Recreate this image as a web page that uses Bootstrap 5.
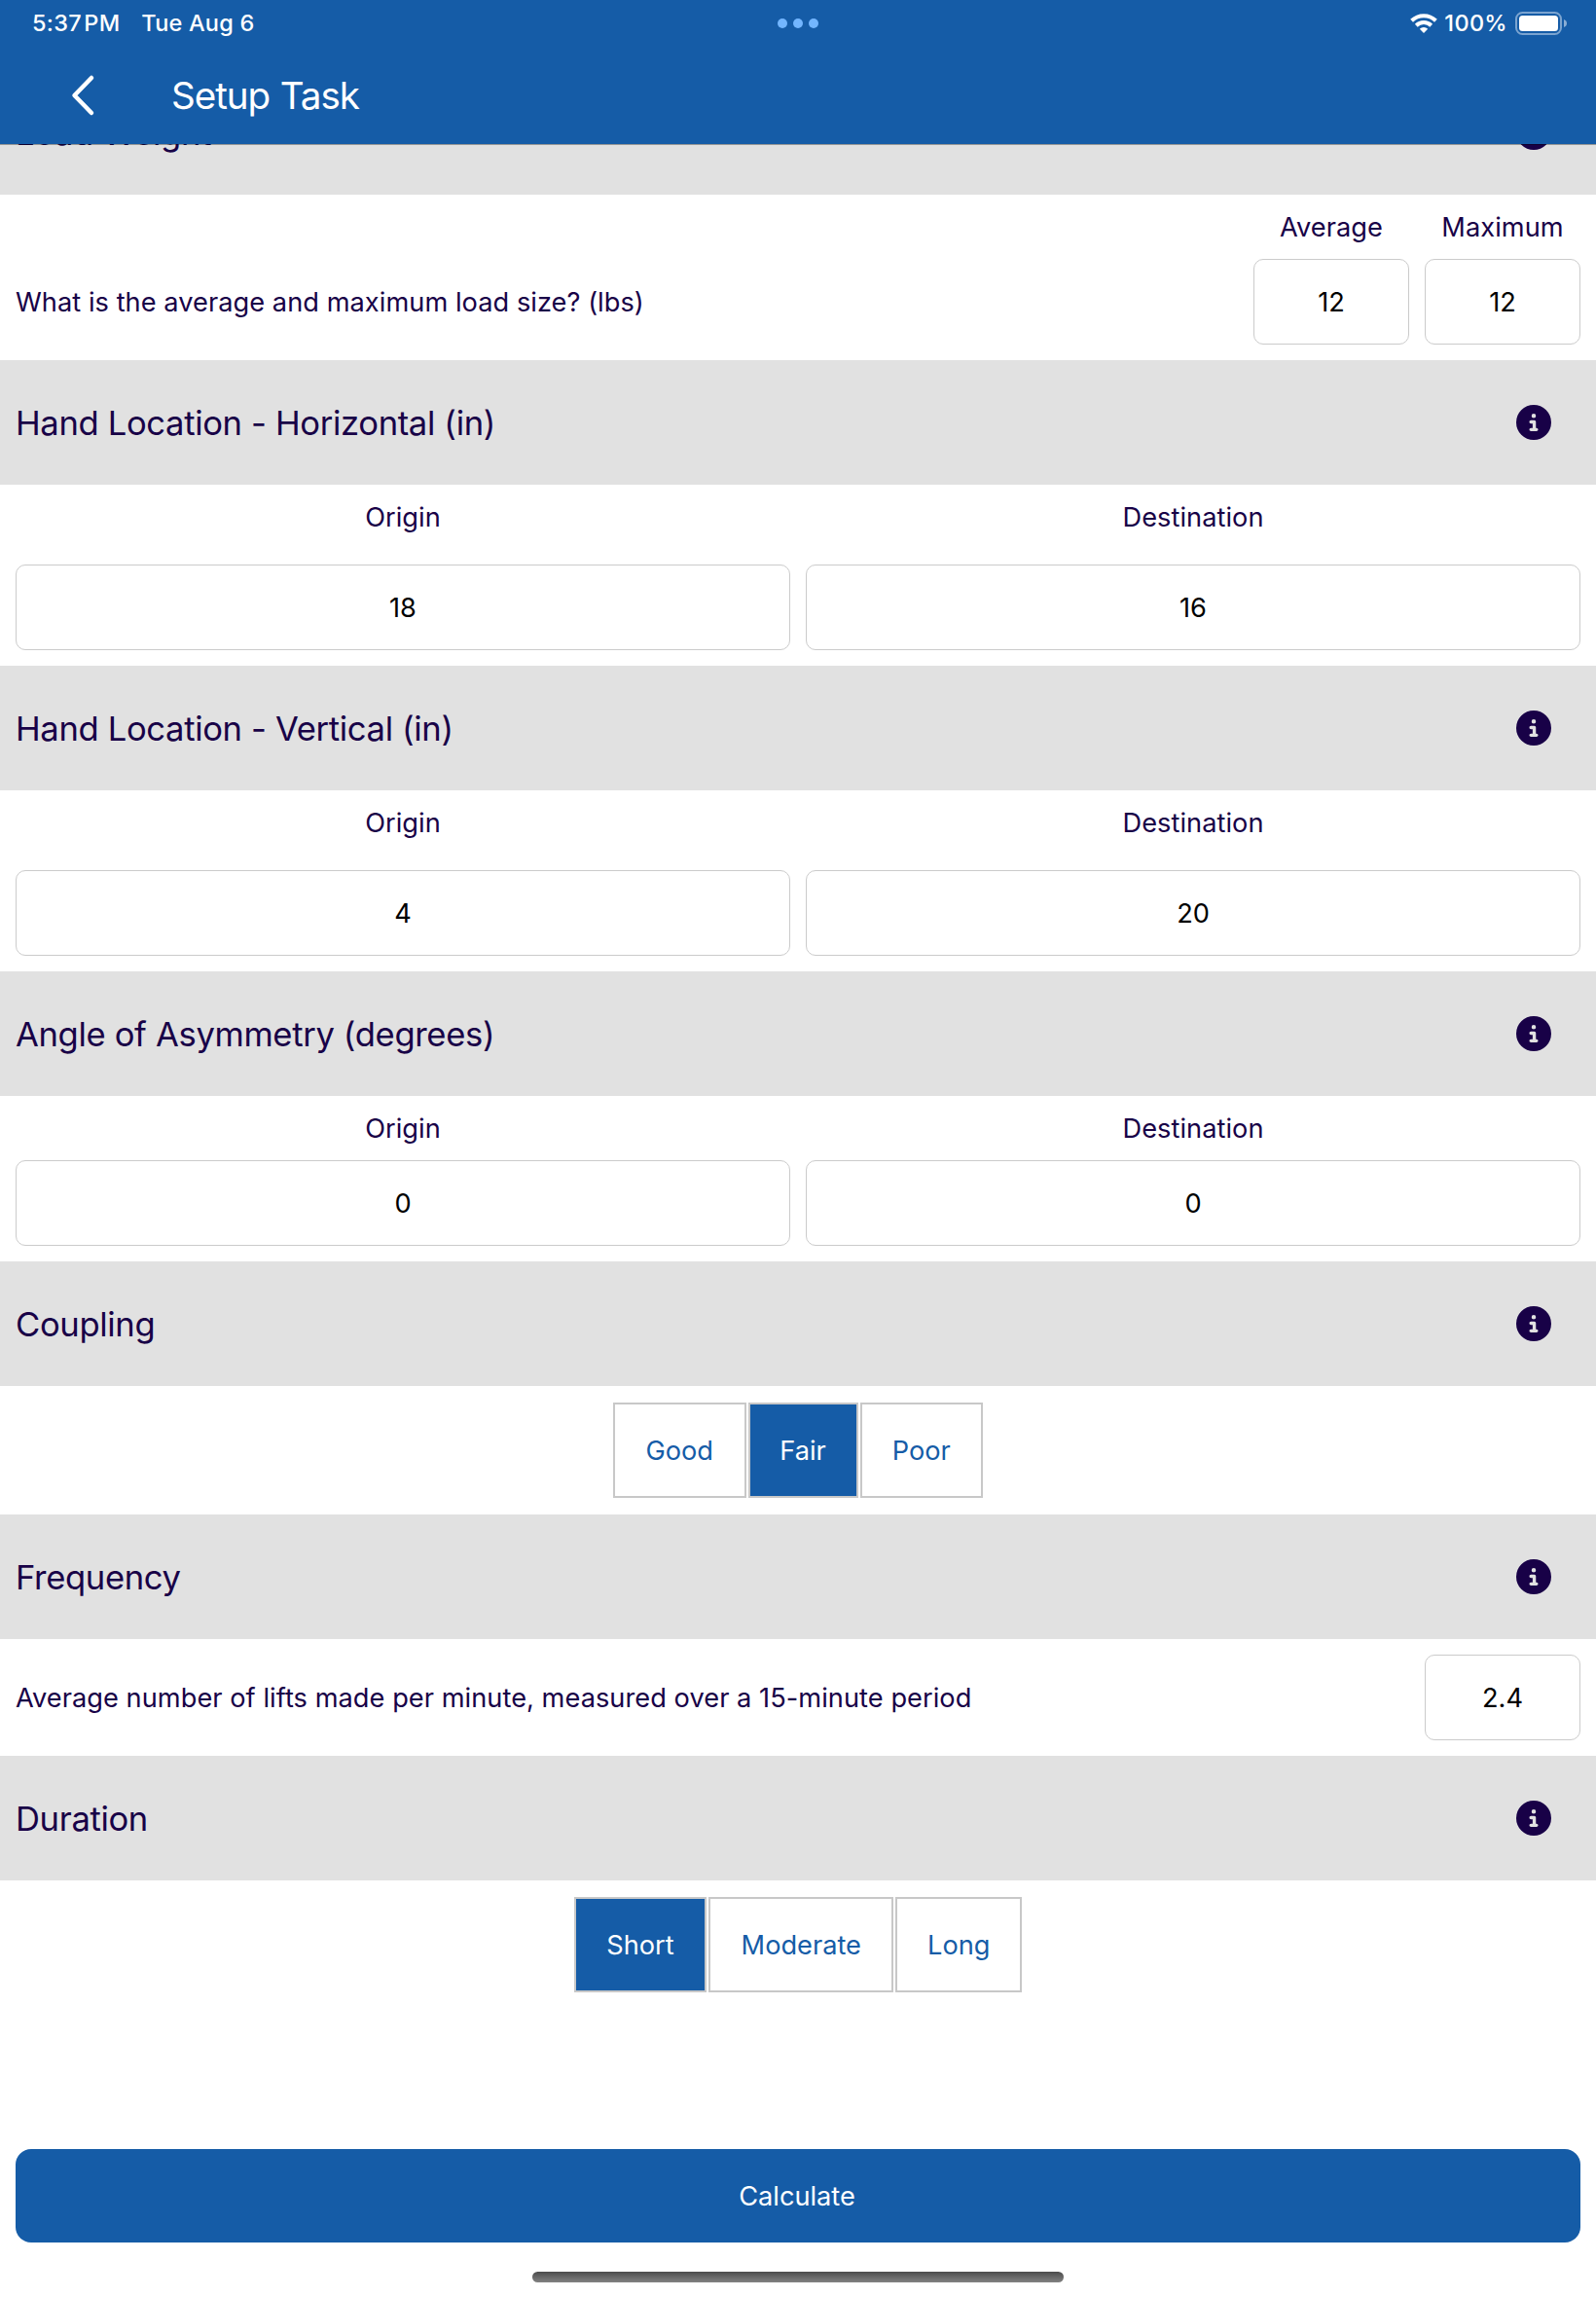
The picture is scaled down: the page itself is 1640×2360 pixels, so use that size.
<!DOCTYPE html>
<html lang="en">
<head>
<meta charset="utf-8">
<meta name="viewport" content="width=device-width, initial-scale=1">
<title>Setup Task</title>
<link href="https://cdn.jsdelivr.net/npm/bootstrap@5.3.0/dist/css/bootstrap.min.css" rel="stylesheet">
<style>
  :root { --brand: #155ca7; --ink: #180147; --band: #e1e1e1; }
  body { font-family: Inter, "Liberation Sans", sans-serif; font-size: 27.2px; line-height: 34px; letter-spacing: .05px; color: var(--ink); background: #fff; height: 2360px; overflow: hidden; }
  .app-top { height: 149px; background: var(--brand); background-clip: padding-box; border-bottom: 1px solid rgba(0,0,0,.33); }
  .status { height: 48px; font-size: 23.5px; line-height: 48px; padding: 0 30px; font-weight: 450; }
  .status-time { letter-spacing: .25px; margin-left: 3px; margin-right: 22px; word-spacing: -4px; }
  .status-date { letter-spacing: .2px; }
  .status-pct { letter-spacing: .3px; margin-left: 7px; margin-right: 8px; }
  .status-side { flex: 1 1 0; }
  .status-dots { gap: 6px; }
  .status-dot { width: 10px; height: 10px; background: #73b6ff; }
  .title-bar { height: 100px; padding-left: 72px; }
  .title-bar h1 { font-size: 38.6px; line-height: 48px; margin-left: 76px; letter-spacing: -1.05px; word-spacing: 1px; }
  .page-body { padding-top: 72px; height: 2360px; }
  .band { height: 128px; background: var(--band); padding: 0 46px 0 16px; }
  .band h2 { font-size: 34.6px; line-height: 44px; letter-spacing: -.34px; padding-bottom: 1px; }
  .field-label { padding-top: 1px; margin-bottom: 15px; }
  .field-label.roomy { margin-bottom: 31px; }
  .question { padding-top: 1px; }
  .q-load { padding-bottom: 26px; }
  .field-box { height: 88px; border: 1px solid #cbcbcb; border-radius: 10px; padding: 0; font-size: 27.2px; line-height: 34px; color: #000; }
  .field-box:focus { box-shadow: none; }
  .field-sm { width: 160px; }
  .choice { height: 98px; border: 2px solid #c8c8c8; border-radius: 0; padding: 2px 0 0; font-size: 27.2px; color: var(--brand); background: #fff; }
  .choice.active { background: var(--brand); color: #fff; border-color: #c8c8c8; }
  .choices { padding: 17px 0; gap: 2px; }
  .w-good { width: 136.5px; } .w-fair { width: 113px; } .w-poor { width: 126.5px; }
  .w-moderate { width: 190px; } .w-long { width: 130px; }
  .calc { height: 96px; border-radius: 16px; background: var(--brand); color: #fff; font-size: 27.2px; margin: 0 16px; padding: 2px 2px 0 0; }
  .home-bar { width: 546px; height: 11px; margin: 30px auto 15px; background: linear-gradient(#4b4b4b, #828282); }
</style>
</head>
<body>
<svg class="d-none">
  <symbol id="info" viewBox="0 0 512 512"><path fill="currentColor" d="M256 512A256 256 0 1 0 256 0a256 256 0 1 0 0 512zM216 336h24V272H216c-13.3 0-24-10.700-24-24s10.700-24 24-24h48c13.300 0 24 10.700 24 24v88h8c13.300 0 24 10.700 24 24s-10.700 24-24 24H216c-13.300 0-24-10.700-24-24s10.700-24 24-24zm40-208a32 32 0 1 1 0 64 32 32 0 1 1 0-64z"/></symbol>
</svg>

<header class="app-top fixed-top text-white">
  <div class="status d-flex align-items-center">
    <div class="status-side d-flex">
      <span class="status-time">5:37 PM</span><span class="status-date">Tue Aug 6</span>
    </div>
    <div class="status-dots d-flex">
      <span class="status-dot rounded-circle"></span><span class="status-dot rounded-circle"></span><span class="status-dot rounded-circle"></span>
    </div>
    <div class="status-side d-flex justify-content-end align-items-center">
      <svg width="28" height="20" viewBox="0 0 28 20" fill="none" stroke="#fff" stroke-width="4">
        <path d="M1.600 7.300a17.800 17.800 0 0 1 24.800 0"/>
        <path d="M6.300 12.200a11.100 11.100 0 0 1 15.400 0"/>
        <path d="M14 20l-4.200-4.300a6 6 0 0 1 8.400 0z" fill="#fff" stroke="none"/>
      </svg>
      <span class="status-pct">100%</span>
      <svg width="53" height="24" viewBox="0 0 53 24">
        <rect x="1" y="1" width="46" height="22" rx="6.500" fill="none" stroke="#7ba4d0" stroke-width="2"/>
        <rect x="4" y="4" width="40" height="16" rx="3.500" fill="#fff"/>
        <path d="M50 8c4 1.200 4 6.800 0 8z" fill="#8aaed5"/>
      </svg>
    </div>
  </div>
  <div class="title-bar d-flex align-items-center">
    <svg width="28" height="44" viewBox="0 0 28 44" fill="none" stroke="#fff" stroke-width="4.500" stroke-linecap="round" stroke-linejoin="round"><path d="M22 4L4.500 22 22 40"/></svg>
    <h1 class="fw-normal mb-0">Setup Task</h1>
  </div>
</header>

<main class="page-body d-flex flex-column">
  <div class="band d-flex align-items-center justify-content-between"><h2 class="fw-normal mb-0">Load Weight</h2><svg width="36" height="36"><use href="#info"/></svg></div>
  <section class="d-flex justify-content-between align-items-end p-3">
    <label class="question q-load">What is the average and maximum load size? (lbs)</label>
    <div class="d-flex gap-3 text-center">
      <div class="field-sm"><div class="field-label">Average</div><input class="form-control field-box text-center" value="12"></div>
      <div class="field-sm"><div class="field-label">Maximum</div><input class="form-control field-box text-center" value="12"></div>
    </div>
  </section>

  <div class="band d-flex align-items-center justify-content-between"><h2 class="fw-normal mb-0">Hand Location - Horizontal (in)</h2><svg width="36" height="36"><use href="#info"/></svg></div>
  <section class="d-flex gap-3 p-3 text-center">
    <div class="flex-fill"><div class="field-label roomy">Origin</div><input class="form-control field-box text-center" value="18"></div>
    <div class="flex-fill"><div class="field-label roomy">Destination</div><input class="form-control field-box text-center" value="16"></div>
  </section>

  <div class="band d-flex align-items-center justify-content-between"><h2 class="fw-normal mb-0">Hand Location - Vertical (in)</h2><svg width="36" height="36"><use href="#info"/></svg></div>
  <section class="d-flex gap-3 p-3 text-center">
    <div class="flex-fill"><div class="field-label roomy">Origin</div><input class="form-control field-box text-center" value="4"></div>
    <div class="flex-fill"><div class="field-label roomy">Destination</div><input class="form-control field-box text-center" value="20"></div>
  </section>

  <div class="band d-flex align-items-center justify-content-between"><h2 class="fw-normal mb-0">Angle of Asymmetry (degrees)</h2><svg width="36" height="36"><use href="#info"/></svg></div>
  <section class="d-flex gap-3 p-3 text-center">
    <div class="flex-fill"><div class="field-label">Origin</div><input class="form-control field-box text-center" value="0"></div>
    <div class="flex-fill"><div class="field-label">Destination</div><input class="form-control field-box text-center" value="0"></div>
  </section>

  <div class="band d-flex align-items-center justify-content-between"><h2 class="fw-normal mb-0">Coupling</h2><svg width="36" height="36"><use href="#info"/></svg></div>
  <section class="choices d-flex justify-content-center">
    <button class="btn choice w-good">Good</button><button class="btn choice active w-fair">Fair</button><button class="btn choice w-poor">Poor</button>
  </section>

  <div class="band d-flex align-items-center justify-content-between"><h2 class="fw-normal mb-0">Frequency</h2><svg width="36" height="36"><use href="#info"/></svg></div>
  <section class="d-flex justify-content-between align-items-center p-3">
    <label class="question">Average number of lifts made per minute, measured over a 15-minute period</label>
    <input class="form-control field-box field-sm text-center" value="2.4">
  </section>

  <div class="band d-flex align-items-center justify-content-between"><h2 class="fw-normal mb-0">Duration</h2><svg width="36" height="36"><use href="#info"/></svg></div>
  <section class="choices d-flex justify-content-center">
    <button class="btn choice active w-good">Short</button><button class="btn choice w-moderate">Moderate</button><button class="btn choice w-long">Long</button>
  </section>

  <footer class="mt-auto d-flex flex-column">
    <button class="btn calc">Calculate</button>
    <div class="home-bar rounded-pill"></div>
  </footer>
</main>
<script src="https://cdn.jsdelivr.net/npm/bootstrap@5.3.0/dist/js/bootstrap.bundle.min.js"></script>
</body>
</html>
